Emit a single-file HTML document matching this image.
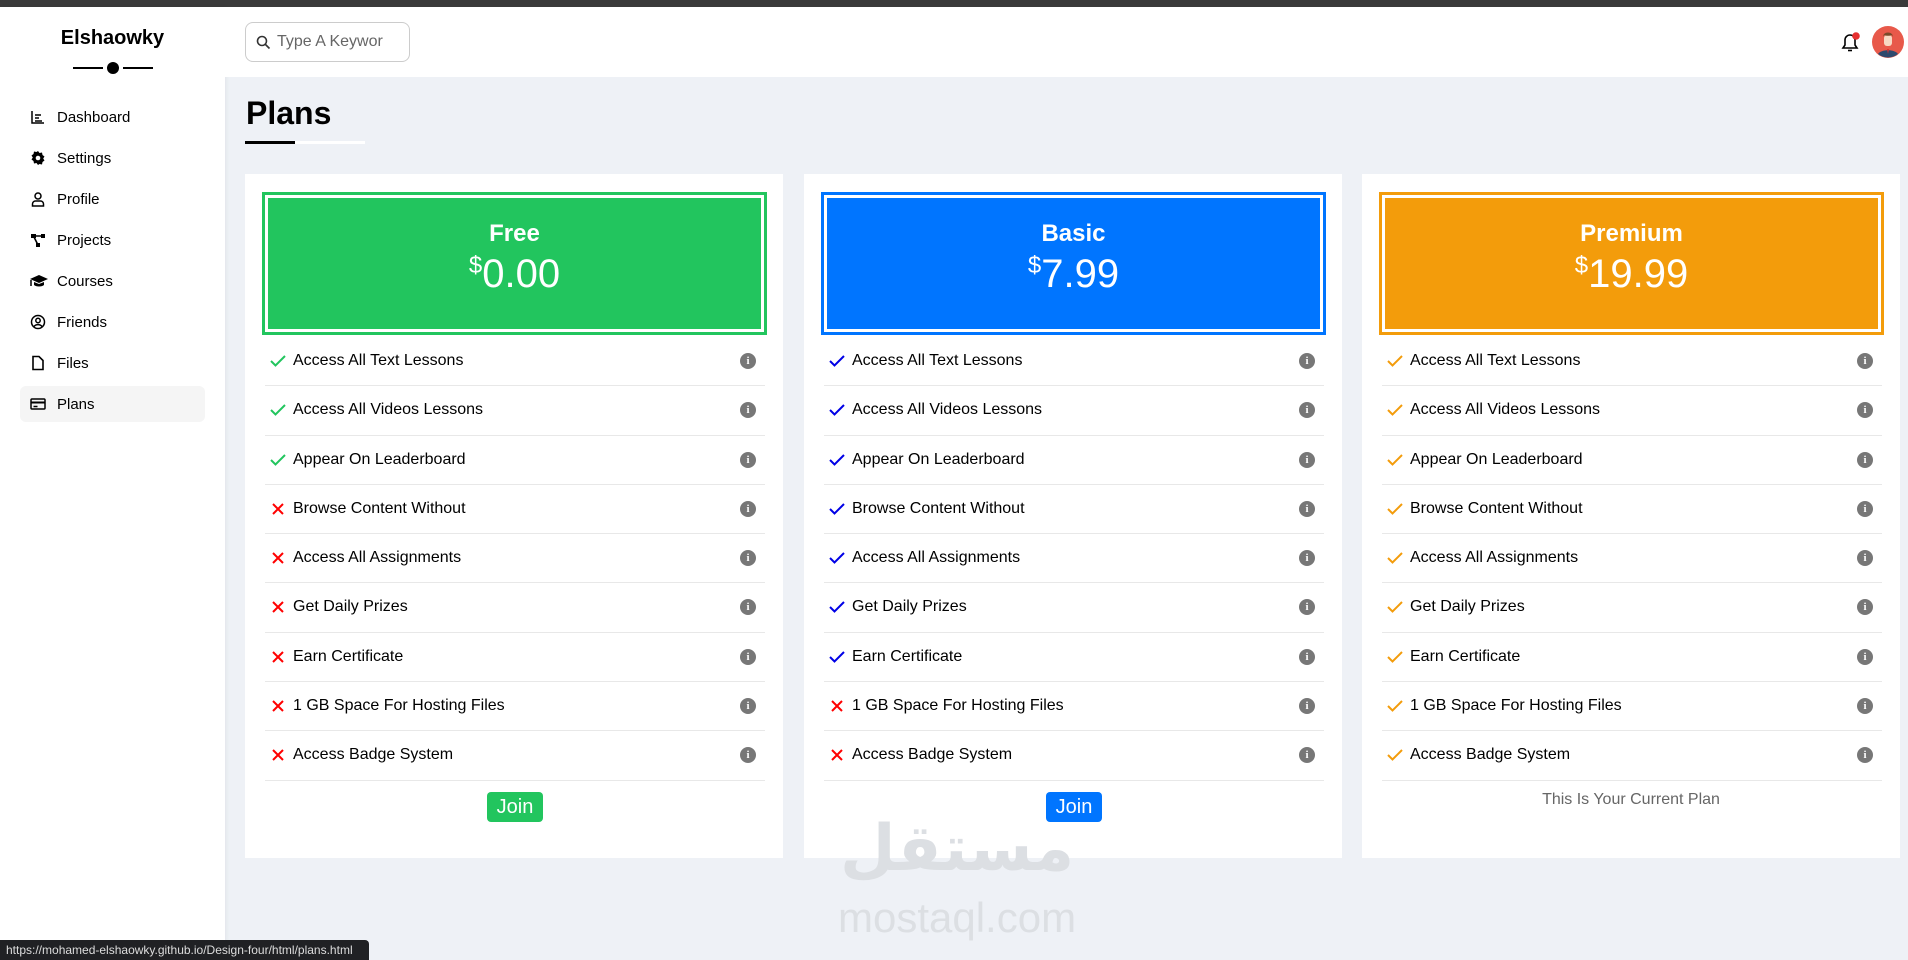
<!DOCTYPE html>
<html><head><meta charset="utf-8"><style>
*{box-sizing:border-box;margin:0;padding:0}
body{width:1908px;height:960px;overflow:hidden;background:#eef1f6;font-family:"Liberation Sans",sans-serif;position:relative;color:#000}
.topbar{position:absolute;left:0;top:0;width:1908px;height:7px;background:#3a3a3a}
.side{position:absolute;left:0;top:7px;width:225px;height:953px;background:#fff;box-shadow:1px 0 4px rgba(0,0,0,.06)}
.logo{position:absolute;left:0;width:225px;top:20px;text-align:center;font-weight:bold;font-size:20px}
.lline{position:absolute;top:60px;height:2px;background:#000;width:30px}
.dot{position:absolute;left:107px;top:55px;width:12px;height:12px;border-radius:50%;background:#000}
.nav{position:absolute;left:20px;width:185px;height:36px;display:flex;align-items:center;font-size:15px}
.nav svg{position:absolute;left:10px}
.nav span{position:absolute;left:37px}
.nav.active{background:#f5f5f5;border-radius:6px}
.header{position:absolute;left:225px;top:7px;width:1683px;height:70px;background:#fff}
.search{position:absolute;left:245px;top:22px;width:165px;height:40px;border:1px solid #ccc;border-radius:8px;font-size:16px;color:#666}
.search span{position:absolute;left:31px;top:10px}
h1{position:absolute;left:246px;top:95px;font-size:32px;font-weight:bold}
.u1{position:absolute;left:245px;top:141px;width:50px;height:3px;background:#000}
.u2{position:absolute;left:295px;top:141px;width:70px;height:3px;background:#fff}
.card{position:absolute;top:174px;width:538px;height:684px;background:#fff}
.hb{position:absolute;left:17px;top:18px;width:505px;height:143px;border:3px solid;padding:3px;background:#fff}
.hi{width:100%;height:100%;color:#fff;text-align:center}
.hi .t{padding-top:22px;font-weight:bold;font-size:24px}
.hi .p{font-size:40px;margin-top:4px}
.hi .p sup{font-size:24px;vertical-align:14px}
ul{position:absolute;left:20px;top:163px;width:500px;list-style:none}
li{height:49.3px;border-bottom:1px solid #e8e8e8;position:relative;font-size:16px}
li .ic{position:absolute;left:5px;top:17px}
li .tx{position:absolute;left:28px;top:15px}
li .in{position:absolute;right:9px;top:16px;width:16px;height:16px;border-radius:50%;background:#777;color:#fff;font-size:11px;font-weight:bold;text-align:center;line-height:16px;font-family:"Liberation Serif",serif}
.join{position:absolute;top:618px;left:242px;width:56px;height:30px;border-radius:4px;color:#fff;font-size:20px;text-align:center;line-height:30px}
.cur{position:absolute;top:617px;left:0;width:538px;text-align:center;color:#666;font-size:16px}
.wm1{position:absolute;left:840px;top:812px;font-size:64px;color:#dcdfe3;font-weight:bold;font-family:"DejaVu Sans",sans-serif}
.wm2{position:absolute;left:838px;top:894px;font-size:42px;color:#dcdfe3;font-family:"Liberation Sans",sans-serif}
.status{position:absolute;left:0;top:940px;width:369px;height:20px;background:#202124;color:#ddd;font-size:12px;line-height:20px;padding-left:6px;border-top-right-radius:4px}
</style></head><body>
<div class="topbar"></div>
<div class="side">
<div class="logo">Elshaowky</div>
<div class="lline" style="left:73px"></div><div class="dot"></div><div class="lline" style="left:123px"></div>
</div>
<div class="nav" style="top:99px"><svg width="16" height="16" viewBox="0 0 16 16" fill="none" stroke="#000" stroke-width="1.5"><path d="M2 2v12h12M5 6h6M5 9h4M5 12h7"/></svg><span>Dashboard</span></div>
<div class="nav" style="top:140px"><svg width="16" height="16" viewBox="0 0 16 16"><path fill="#000" d="M8 1l1.5 2 2.5-.5.5 2.5 2 1.5-1.3 2 1.3 2-2 1.5-.5 2.5-2.5-.5L8 15l-1.5-2-2.5.5-.5-2.5-2-1.5 1.3-2-1.3-2 2-1.5.5-2.5 2.5.5z"/><circle cx="8" cy="8" r="2.3" fill="#fff"/></svg><span>Settings</span></div>
<div class="nav" style="top:181px"><svg width="16" height="16" viewBox="0 0 16 16" fill="none" stroke="#000" stroke-width="1.5"><circle cx="8" cy="5" r="3"/><path d="M2.5 15v-2a3 3 0 0 1 3-3h5a3 3 0 0 1 3 3v2z"/></svg><span>Profile</span></div>
<div class="nav" style="top:222px"><svg width="16" height="16" viewBox="0 0 16 16"><rect x="1" y="2" width="5" height="4" fill="#000"/><rect x="11" y="2" width="4" height="4" fill="#000"/><rect x="6" y="11" width="4" height="4" fill="#000"/><path d="M4 4h9M4 5l4 8" stroke="#000" stroke-width="1.6"/></svg><span>Projects</span></div>
<div class="nav" style="top:263px"><svg width="18" height="16" viewBox="0 0 18 16"><path fill="#000" d="M9 2L0 6l9 4 9-4zM4 9v3c2 2 8 2 10 0V9l-5 2z"/><path d="M1 7v6" stroke="#000" stroke-width="1.5"/></svg><span>Courses</span></div>
<div class="nav" style="top:304px"><svg width="16" height="16" viewBox="0 0 16 16" fill="none" stroke="#000" stroke-width="1.5"><circle cx="8" cy="8" r="6.5"/><circle cx="8" cy="6.5" r="2.2"/><path d="M4 12.5c2-2.5 6-2.5 8 0"/></svg><span>Friends</span></div>
<div class="nav" style="top:345px"><svg width="16" height="16" viewBox="0 0 16 16" fill="none" stroke="#000" stroke-width="1.6"><path d="M3 1.5h6l4 4v9H3z"/></svg><span>Files</span></div>
<div class="nav active" style="top:386px"><svg width="16" height="16" viewBox="0 0 16 16" fill="none" stroke="#000" stroke-width="1.5"><rect x="1" y="3" width="14" height="10" rx="1"/><path d="M1 6.5h14" stroke-width="2"/><path d="M3.5 10.5h4"/></svg><span>Plans</span></div>
<div class="header"></div>
<div class="search"><svg style="position:absolute;left:10px;top:12px" width="15" height="15" viewBox="0 0 15 15" fill="none" stroke="#333" stroke-width="1.6"><circle cx="6" cy="6" r="4.5"/><path d="M9.5 9.5l4 4"/></svg><span>Type A Keywor</span></div>
<svg style="position:absolute;left:1838px;top:30px" width="24" height="24" viewBox="0 0 24 24" fill="none" stroke="#000" stroke-width="1.6"><path d="M5 18h14l-2-3v-5a5 5 0 0 0-10 0v5z"/><path d="M10 20.5h4"/><circle cx="18" cy="6" r="3.8" fill="#e63030" stroke="none"/></svg>
<svg style="position:absolute;left:1872px;top:26px" width="32" height="32" viewBox="0 0 32 32"><circle cx="16" cy="16" r="16" fill="#e8594a"/><path d="M6 28c3-5 17-5 20 0a16 16 0 0 1-20 0z" fill="#2d4a6e"/><rect x="12" y="9" width="8" height="11" rx="3" fill="#f7d9c4"/><path d="M11 11c0-6 10-6 10 0l-1-2c-2 1-6 1-8 0z" fill="#7a4a2a"/><path d="M15 23h2l-1 5z" fill="#d33"/></svg>
<h1>Plans</h1><div class="u1"></div><div class="u2"></div>

<div class="card" style="left:245px">
<div class="hb" style="border-color:#22c55e"><div class="hi" style="background:#22c55e"><div class="t">Free</div><div class="p"><sup>$</sup>0.00</div></div></div>
<ul>
<li><svg class="ic" width="16" height="14" viewBox="0 0 16 14"><path d="M1 7l4.5 4.5L15 2" fill="none" stroke="#22c55e" stroke-width="2"/></svg><span class="tx">Access All Text Lessons</span><span class="in">i</span></li>
<li><svg class="ic" width="16" height="14" viewBox="0 0 16 14"><path d="M1 7l4.5 4.5L15 2" fill="none" stroke="#22c55e" stroke-width="2"/></svg><span class="tx">Access All Videos Lessons</span><span class="in">i</span></li>
<li><svg class="ic" width="16" height="14" viewBox="0 0 16 14"><path d="M1 7l4.5 4.5L15 2" fill="none" stroke="#22c55e" stroke-width="2"/></svg><span class="tx">Appear On Leaderboard</span><span class="in">i</span></li>
<li><svg class="ic" width="16" height="14" viewBox="0 0 16 14"><path d="M3 2l10 10M13 2L3 12" stroke="#f00" stroke-width="2"/></svg><span class="tx">Browse Content Without</span><span class="in">i</span></li>
<li><svg class="ic" width="16" height="14" viewBox="0 0 16 14"><path d="M3 2l10 10M13 2L3 12" stroke="#f00" stroke-width="2"/></svg><span class="tx">Access All Assignments</span><span class="in">i</span></li>
<li><svg class="ic" width="16" height="14" viewBox="0 0 16 14"><path d="M3 2l10 10M13 2L3 12" stroke="#f00" stroke-width="2"/></svg><span class="tx">Get Daily Prizes</span><span class="in">i</span></li>
<li><svg class="ic" width="16" height="14" viewBox="0 0 16 14"><path d="M3 2l10 10M13 2L3 12" stroke="#f00" stroke-width="2"/></svg><span class="tx">Earn Certificate</span><span class="in">i</span></li>
<li><svg class="ic" width="16" height="14" viewBox="0 0 16 14"><path d="M3 2l10 10M13 2L3 12" stroke="#f00" stroke-width="2"/></svg><span class="tx">1 GB Space For Hosting Files</span><span class="in">i</span></li>
<li><svg class="ic" width="16" height="14" viewBox="0 0 16 14"><path d="M3 2l10 10M13 2L3 12" stroke="#f00" stroke-width="2"/></svg><span class="tx">Access Badge System</span><span class="in">i</span></li>
</ul>
<div class="join" style="background:#22c55e">Join</div>
</div>

<div class="card" style="left:804px">
<div class="hb" style="border-color:#0075ff"><div class="hi" style="background:#0075ff"><div class="t">Basic</div><div class="p"><sup>$</sup>7.99</div></div></div>
<ul>
<li><svg class="ic" width="16" height="14" viewBox="0 0 16 14"><path d="M1 7l4.5 4.5L15 2" fill="none" stroke="#0000e6" stroke-width="2"/></svg><span class="tx">Access All Text Lessons</span><span class="in">i</span></li>
<li><svg class="ic" width="16" height="14" viewBox="0 0 16 14"><path d="M1 7l4.5 4.5L15 2" fill="none" stroke="#0000e6" stroke-width="2"/></svg><span class="tx">Access All Videos Lessons</span><span class="in">i</span></li>
<li><svg class="ic" width="16" height="14" viewBox="0 0 16 14"><path d="M1 7l4.5 4.5L15 2" fill="none" stroke="#0000e6" stroke-width="2"/></svg><span class="tx">Appear On Leaderboard</span><span class="in">i</span></li>
<li><svg class="ic" width="16" height="14" viewBox="0 0 16 14"><path d="M1 7l4.5 4.5L15 2" fill="none" stroke="#0000e6" stroke-width="2"/></svg><span class="tx">Browse Content Without</span><span class="in">i</span></li>
<li><svg class="ic" width="16" height="14" viewBox="0 0 16 14"><path d="M1 7l4.5 4.5L15 2" fill="none" stroke="#0000e6" stroke-width="2"/></svg><span class="tx">Access All Assignments</span><span class="in">i</span></li>
<li><svg class="ic" width="16" height="14" viewBox="0 0 16 14"><path d="M1 7l4.5 4.5L15 2" fill="none" stroke="#0000e6" stroke-width="2"/></svg><span class="tx">Get Daily Prizes</span><span class="in">i</span></li>
<li><svg class="ic" width="16" height="14" viewBox="0 0 16 14"><path d="M1 7l4.5 4.5L15 2" fill="none" stroke="#0000e6" stroke-width="2"/></svg><span class="tx">Earn Certificate</span><span class="in">i</span></li>
<li><svg class="ic" width="16" height="14" viewBox="0 0 16 14"><path d="M3 2l10 10M13 2L3 12" stroke="#f00" stroke-width="2"/></svg><span class="tx">1 GB Space For Hosting Files</span><span class="in">i</span></li>
<li><svg class="ic" width="16" height="14" viewBox="0 0 16 14"><path d="M3 2l10 10M13 2L3 12" stroke="#f00" stroke-width="2"/></svg><span class="tx">Access Badge System</span><span class="in">i</span></li>
</ul>
<div class="join" style="background:#0075ff">Join</div>
</div>

<div class="card" style="left:1362px">
<div class="hb" style="border-color:#f39c0b"><div class="hi" style="background:#f39c0b"><div class="t">Premium</div><div class="p"><sup>$</sup>19.99</div></div></div>
<ul>
<li><svg class="ic" width="16" height="14" viewBox="0 0 16 14"><path d="M1 7l4.5 4.5L15 2" fill="none" stroke="#f39c0b" stroke-width="2"/></svg><span class="tx">Access All Text Lessons</span><span class="in">i</span></li>
<li><svg class="ic" width="16" height="14" viewBox="0 0 16 14"><path d="M1 7l4.5 4.5L15 2" fill="none" stroke="#f39c0b" stroke-width="2"/></svg><span class="tx">Access All Videos Lessons</span><span class="in">i</span></li>
<li><svg class="ic" width="16" height="14" viewBox="0 0 16 14"><path d="M1 7l4.5 4.5L15 2" fill="none" stroke="#f39c0b" stroke-width="2"/></svg><span class="tx">Appear On Leaderboard</span><span class="in">i</span></li>
<li><svg class="ic" width="16" height="14" viewBox="0 0 16 14"><path d="M1 7l4.5 4.5L15 2" fill="none" stroke="#f39c0b" stroke-width="2"/></svg><span class="tx">Browse Content Without</span><span class="in">i</span></li>
<li><svg class="ic" width="16" height="14" viewBox="0 0 16 14"><path d="M1 7l4.5 4.5L15 2" fill="none" stroke="#f39c0b" stroke-width="2"/></svg><span class="tx">Access All Assignments</span><span class="in">i</span></li>
<li><svg class="ic" width="16" height="14" viewBox="0 0 16 14"><path d="M1 7l4.5 4.5L15 2" fill="none" stroke="#f39c0b" stroke-width="2"/></svg><span class="tx">Get Daily Prizes</span><span class="in">i</span></li>
<li><svg class="ic" width="16" height="14" viewBox="0 0 16 14"><path d="M1 7l4.5 4.5L15 2" fill="none" stroke="#f39c0b" stroke-width="2"/></svg><span class="tx">Earn Certificate</span><span class="in">i</span></li>
<li><svg class="ic" width="16" height="14" viewBox="0 0 16 14"><path d="M1 7l4.5 4.5L15 2" fill="none" stroke="#f39c0b" stroke-width="2"/></svg><span class="tx">1 GB Space For Hosting Files</span><span class="in">i</span></li>
<li><svg class="ic" width="16" height="14" viewBox="0 0 16 14"><path d="M1 7l4.5 4.5L15 2" fill="none" stroke="#f39c0b" stroke-width="2"/></svg><span class="tx">Access Badge System</span><span class="in">i</span></li>
</ul>
<div class="cur">This Is Your Current Plan</div>
</div>

<div class="wm1">مستقل</div>
<div class="wm2">mostaql.com</div>
<div class="status">https://mohamed-elshaowky.github.io/Design-four/html/plans.html</div>
</body></html>
